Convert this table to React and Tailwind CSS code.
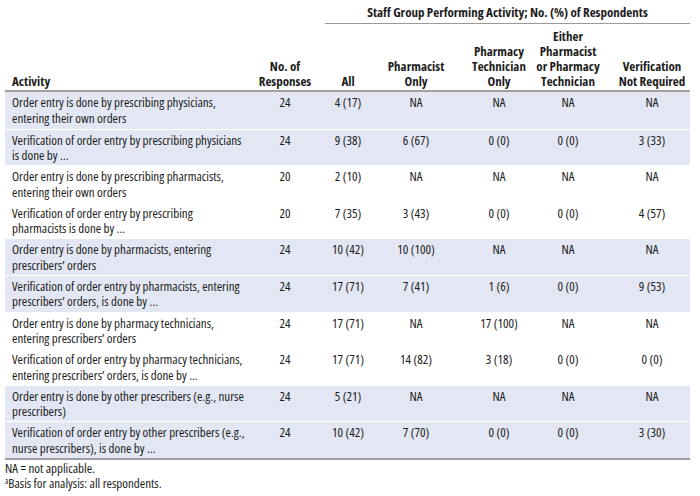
const cols = [
  "w-[250px] pl-[7px] text-left",
  "w-[60px] text-center",
  "w-[66px] text-center",
  "w-[70px] text-center",
  "w-[68px] ml-[14px] text-center",
  "w-[70px] text-center",
  "w-[76px] ml-[11px] text-center",
];

const rows = [
  { act: ["Order entry is done by prescribing physicians,", "entering their own orders"], n: "24", v: ["4 (17)", "NA", "NA", "NA", "NA"], shade: true },
  { act: ["Verification of order entry by prescribing physicians", "is done by …"], n: "24", v: ["9 (38)", "6 (67)", "0 (0)", "0 (0)", "3 (33)"], shade: true },
  { act: ["Order entry is done by prescribing pharmacists,", "entering their own orders"], n: "20", v: ["2 (10)", "NA", "NA", "NA", "NA"], shade: false },
  { act: ["Verification of order entry by prescribing", "pharmacists is done by …"], n: "20", v: ["7 (35)", "3 (43)", "0 (0)", "0 (0)", "4 (57)"], shade: false },
  { act: ["Order entry is done by pharmacists, entering", "prescribers’ orders"], n: "24", v: ["10 (42)", "10 (100)", "NA", "NA", "NA"], shade: true },
  { act: ["Verification of order entry by pharmacists, entering", "prescribers’ orders, is done by …"], n: "24", v: ["17 (71)", "7 (41)", "1 (6)", "0 (0)", "9 (53)"], shade: true },
  { act: ["Order entry is done by pharmacy technicians,", "entering prescribers’ orders"], n: "24", v: ["17 (71)", "NA", "17 (100)", "NA", "NA"], shade: false },
  { act: ["Verification of order entry by pharmacy technicians,", "entering prescribers’ orders, is done by …"], n: "24", v: ["17 (71)", "14 (82)", "3 (18)", "0 (0)", "0 (0)"], shade: false },
  { act: ["Order entry is done by other prescribers (e.g., nurse", "prescribers)"], n: "24", v: ["5 (21)", "NA", "NA", "NA", "NA"], shade: true },
  { act: ["Verification of order entry by other prescribers (e.g.,", "nurse prescribers), is done by …"], n: "24", v: ["10 (42)", "7 (70)", "0 (0)", "0 (0)", "3 (30)"], shade: true },
];

const headers = [
  ["Activity"],
  ["No. of", "Responses"],
  ["All"],
  ["Pharmacist", "Only"],
  ["Pharmacy", "Technician", "Only"],
  ["Either", "Pharmacist", "or Pharmacy", "Technician"],
  ["Verification", "Not Required"],
];

export default function App() {
  return (
    <div className="w-[700px] h-[496px] bg-white text-[#1c1c1c] font-['Open_Sans','Noto_Sans',sans-serif] font-stretch-[78%] text-[13px] overflow-hidden">
      <div className="ml-[5px] w-[685px]">
        {/* spanning header */}
        <div className="flex">
          <div className="w-[320px]" />
          <div className="flex-1 border-b border-[#9a9a9a] pt-[5px] pb-[4px] text-center font-bold leading-[14px]">
            Staff Group Performing Activity; No. (%) of Respondents
          </div>
        </div>

        {/* column headers */}
        <div className="flex items-end h-[68px] pb-[1px] border-b-2 border-[#a0a0a0] font-bold leading-[15px]">
          {headers.map((h, i) => (
            <div key={i} className={cols[i]}>
              {h.map((line, j) => (
                <div key={j} className="whitespace-nowrap">{line}</div>
              ))}
            </div>
          ))}
        </div>

        {/* body */}
        <div className="border-b-2 border-[#a0a0a0]">
          {rows.map((r, i) => (
            <div
              key={i}
              className={`flex h-[36.6px] pt-[3px] leading-[15.5px] ${r.shade ? "bg-[#e3e7f3]" : "bg-white"} ${i > 0 ? "border-t border-white" : ""}`}
            >
              <div className={cols[0]}>
                {r.act.map((line, j) => (
                  <div key={j} className="whitespace-nowrap">{line}</div>
                ))}
              </div>
              <div className={cols[1]}>{r.n}</div>
              {r.v.map((val, j) => (
                <div key={j} className={`${cols[j + 2]} whitespace-nowrap`}>{val}</div>
              ))}
            </div>
          ))}
        </div>

        {/* footnotes */}
        <div className="pt-[1px] text-[13px] leading-[15px]">
          <div>NA = not applicable.</div>
          <div>
            <sup className="text-[8px]">a</sup>Basis for analysis: all respondents.
          </div>
        </div>
      </div>
    </div>
  );
}
